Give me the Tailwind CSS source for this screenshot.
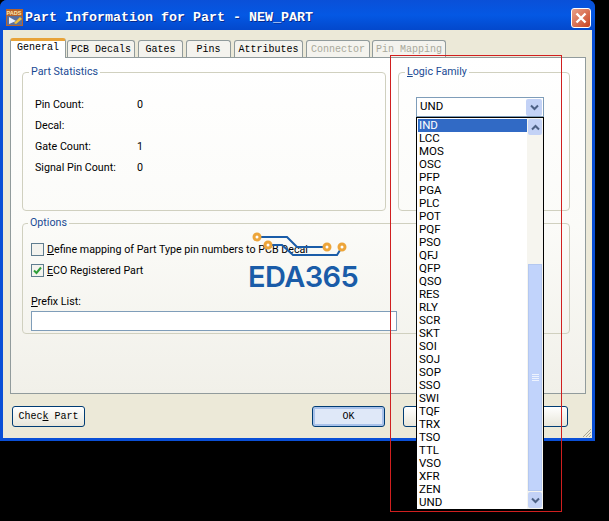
<!DOCTYPE html>
<html lang="en">
<head>
    <meta charset="UTF-8">
    <title>Part Information</title>
    <script src="https://cdn.jsdelivr.net/npm/@tailwindcss/browser@4"></script>
</head>
<body class="bg-black">
<div class="relative w-[609px] h-[521px] overflow-hidden bg-black font-['Roboto',sans-serif] text-[10.7px] text-black">

    <!-- Window -->
    <div class="w-[595px] h-[441px] flex flex-col rounded-t-[7px] overflow-hidden bg-[#0a4fd6]">
        <!-- Title bar -->
        <div class="h-[30px] shrink-0 flex items-center pt-[5px] pl-[6px] pr-[4px] bg-gradient-to-b from-[#0a50d8] via-[#0458e4] to-[#0348cc]">
            <svg width="17" height="17" viewBox="0 0 17 17" class="shrink-0">
                <rect width="17" height="17" fill="#b5622c"/>
                <rect x="1" y="7" width="15" height="9" fill="#5a6f9c"/>
                <path d="M3 8 L10 12 L3 15 Z" fill="#e8f0ff"/>
                <path d="M8 14 L14 8 L16 10 L10 15 Z" fill="#f2c23a"/>
                <text x="0.5" y="5.5" font-size="5.5" font-weight="700" fill="#ffe9b0" font-family="Liberation Sans">PADS</text>
            </svg>
            <span class="ml-[2px] mt-[1px] font-['Liberation_Mono',monospace] font-bold text-[13.33px] text-white tracking-normal [text-shadow:1px_1px_0_#0a2a8a]">Part Information for Part - NEW_PART</span>
            <div class="ml-auto w-[20px] h-[20px] rounded-[3px] border border-white bg-gradient-to-br from-[#e8a088] to-[#c8401c] flex items-center justify-center">
                <svg width="12" height="12" viewBox="0 0 12 12"><path d="M1.5 1.5 L10.5 10.5 M10.5 1.5 L1.5 10.5" stroke="#fff" stroke-width="2.4"/></svg>
            </div>
        </div>

        <!-- Client area -->
        <div class="relative flex-1 mx-[3px] mb-[3px] bg-[#ece9d8] pl-[7px] pr-[6px] flex flex-col">
            <!-- Tabs -->
            <div class="flex items-end h-[27px] font-['Liberation_Mono',monospace] text-[10px] leading-none">
                <div class="w-[56px] h-[20px] mr-[1px] -mb-[1px] z-10 relative flex items-center justify-center pb-[3px] bg-white border-x border-[#919b9c] rounded-t-[3px] border-t-[3px] border-t-[#e8a33a]">General</div>
                <div class="w-[68px] h-[17px] mr-[3px] pt-[1px] flex items-center justify-center bg-[#f4f3ee] border border-b-0 border-[#919b9c] rounded-t-[3px]">PCB Decals</div>
                <div class="w-[45px] h-[17px] mr-[3px] pt-[1px] flex items-center justify-center bg-[#f4f3ee] border border-b-0 border-[#919b9c] rounded-t-[3px]">Gates</div>
                <div class="w-[45px] h-[17px] mr-[3px] pt-[1px] flex items-center justify-center bg-[#f4f3ee] border border-b-0 border-[#919b9c] rounded-t-[3px]">Pins</div>
                <div class="w-[69px] h-[17px] mr-[3px] pt-[1px] flex items-center justify-center bg-[#f4f3ee] border border-b-0 border-[#919b9c] rounded-t-[3px]">Attributes</div>
                <div class="w-[64px] h-[17px] mr-[2px] pt-[1px] flex items-center justify-center bg-[#f4f3ee] border border-b-0 border-[#919b9c] rounded-t-[3px] text-[#a9a99b]">Connector</div>
                <div class="w-[74px] h-[17px] pt-[1px] flex items-center justify-center bg-[#f4f3ee] border border-b-0 border-[#919b9c] rounded-t-[3px] text-[#a9a99b]">Pin Mapping</div>
            </div>

            <!-- Tab panel -->
            <div class="w-[576px] h-[337px] border border-[#919b9c] bg-gradient-to-b from-white via-[#fbfbf8] to-[#f1f0e9] pl-[11px] pt-[6px]">
                <div class="flex gap-[12px]">
                    <fieldset class="w-[364px] h-[147px] border border-[#d0d0bf] rounded-[4px] pl-[12px]">
                        <legend class="ml-[-6px] px-[2px] text-[#1a4a94]">Part Statistics</legend>
                        <div class="grid grid-cols-[102px_1fr] auto-rows-[21px] items-center mt-[14px]">
                            <span>Pin Count:</span><span>0</span>
                            <span>Decal:</span><span></span>
                            <span>Gate Count:</span><span>1</span>
                            <span>Signal Pin Count:</span><span>0</span>
                        </div>
                    </fieldset>
                    <fieldset class="w-[172px] h-[147px] border border-[#d0d0bf] rounded-[4px]">
                        <legend class="ml-[6px] px-[2px] text-[#1a4a94]"><u>L</u>ogic Family</legend>
                    </fieldset>
                </div>

                <fieldset class="mt-[4px] w-[548px] h-[119px] border border-[#d0d0bf] rounded-[4px] pl-[8px]">
                    <legend class="ml-[-3px] px-[2px] text-[#1a4a94]">Options</legend>
                    <div class="flex items-center gap-[3px] mt-[12px] h-[13px]">
                        <div class="w-[13px] h-[13px] border border-[#5f7d8f] bg-[#f3f3ee]"></div>
                        <span><u>D</u>efine mapping of Part Type pin numbers to PCB Decal</span>
                    </div>
                    <div class="flex items-center gap-[3px] mt-[8px] h-[13px]">
                        <div class="w-[13px] h-[13px] border border-[#5f7d8f] bg-[#f3f3ee] flex items-center justify-center">
                            <svg width="9" height="9" viewBox="0 0 9 9"><path d="M1 4.5 L3.5 7 L8 1.5" fill="none" stroke="#2f9e3a" stroke-width="2"/></svg>
                        </div>
                        <span><u>E</u>CO Registered Part</span>
                    </div>
                    <div class="mt-[18px] h-[14px] leading-[14px]"><u>P</u>refix List:</div>
                    <div class="mt-[2px] w-[366px] h-[20px] border border-[#7f9db9] bg-white"></div>
                </fieldset>
            </div>

            <!-- Bottom buttons -->
            <div class="flex items-center h-[21px] mt-[12px] ml-[2px] font-['Liberation_Mono',monospace] text-[10px]">
                <div class="w-[73px] h-[21px] border border-[#003c74] rounded-[3px] bg-gradient-to-b from-white to-[#e8e6da] flex items-center justify-center"><span>Chec<u>k</u> Part</span></div>
                <div class="ml-[227px] w-[73px] h-[21px] border border-[#003c74] rounded-[3px] bg-[#dfe8f8] shadow-[inset_0_0_0_2px_#a9c2ea] flex items-center justify-center">OK</div>
                <div class="ml-[18px] w-[73px] h-[21px] border border-[#003c74] rounded-[3px] bg-gradient-to-b from-white to-[#e8e6da]"></div>
                <div class="ml-[19px] w-[73px] h-[21px] border border-[#003c74] rounded-[3px] bg-gradient-to-b from-white to-[#e8e6da]"></div>
            </div>

            <svg width="11" height="11" viewBox="0 0 11 11" class="absolute right-0 bottom-0">
                <path d="M10 2 L2 10 M10 5 L5 10 M10 8 L8 10" stroke="#a8a594" stroke-width="1"/>
            </svg>
        </div>
    </div>

    <!-- Combo box -->
    <div class="absolute left-[416px] top-[97px] w-[128px] h-[20px] border border-[#7f9db9] bg-white flex items-center pl-[3px] pr-[1px] text-[11.5px]">
        <span>UND</span>
        <div class="ml-auto w-[16px] h-[17px] rounded-[2px] bg-[#c3d2f6] flex items-center justify-center">
            <svg width="9" height="7" viewBox="0 0 9 7"><path d="M1 1.5 L4.5 5 L8 1.5" fill="none" stroke="#4d6185" stroke-width="2"/></svg>
        </div>
    </div>

    <!-- Open list -->
    <div class="absolute left-[416px] top-[117px] w-[128px] h-[392px] bg-white border border-black border-b-0 flex">
        <div class="flex-1 pt-[1px] pl-[1px] leading-[13px] text-[11.5px]">
            <div class="h-[13px] bg-[#316ac5] text-white pl-[1px]">IND</div>
            <div class="h-[13px] pl-[1px]">LCC</div>
            <div class="h-[13px] pl-[1px]">MOS</div>
            <div class="h-[13px] pl-[1px]">OSC</div>
            <div class="h-[13px] pl-[1px]">PFP</div>
            <div class="h-[13px] pl-[1px]">PGA</div>
            <div class="h-[13px] pl-[1px]">PLC</div>
            <div class="h-[13px] pl-[1px]">POT</div>
            <div class="h-[13px] pl-[1px]">PQF</div>
            <div class="h-[13px] pl-[1px]">PSO</div>
            <div class="h-[13px] pl-[1px]">QFJ</div>
            <div class="h-[13px] pl-[1px]">QFP</div>
            <div class="h-[13px] pl-[1px]">QSO</div>
            <div class="h-[13px] pl-[1px]">RES</div>
            <div class="h-[13px] pl-[1px]">RLY</div>
            <div class="h-[13px] pl-[1px]">SCR</div>
            <div class="h-[13px] pl-[1px]">SKT</div>
            <div class="h-[13px] pl-[1px]">SOI</div>
            <div class="h-[13px] pl-[1px]">SOJ</div>
            <div class="h-[13px] pl-[1px]">SOP</div>
            <div class="h-[13px] pl-[1px]">SSO</div>
            <div class="h-[13px] pl-[1px]">SWI</div>
            <div class="h-[13px] pl-[1px]">TQF</div>
            <div class="h-[13px] pl-[1px]">TRX</div>
            <div class="h-[13px] pl-[1px]">TSO</div>
            <div class="h-[13px] pl-[1px]">TTL</div>
            <div class="h-[13px] pl-[1px]">VSO</div>
            <div class="h-[13px] pl-[1px]">XFR</div>
            <div class="h-[13px] pl-[1px]">ZEN</div>
            <div class="h-[13px] pl-[1px]">UND</div>
        </div>
        <!-- Scrollbar -->
        <div class="w-[16px] flex flex-col bg-[#f6f5ef]">
            <div class="h-[16px] m-[1px] rounded-[2px] bg-[#c3d2f6] flex items-center justify-center">
                <svg width="9" height="7" viewBox="0 0 9 7"><path d="M1 5.5 L4.5 2 L8 5.5" fill="none" stroke="#4d6185" stroke-width="2"/></svg>
            </div>
            <div class="flex-1 flex flex-col pt-[128px]">
                <div class="flex-1 mx-[1px] bg-[#c1d3fb] border border-[#b4c8f0] flex flex-col items-center justify-center gap-[1px]">
                    <div class="w-[7px] h-[1px] bg-[#eef3fe]"></div>
                    <div class="w-[7px] h-[1px] bg-[#eef3fe]"></div>
                    <div class="w-[7px] h-[1px] bg-[#eef3fe]"></div>
                    <div class="w-[7px] h-[1px] bg-[#eef3fe]"></div>
                </div>
            </div>
            <div class="h-[16px] m-[1px] rounded-[2px] bg-[#c3d2f6] flex items-center justify-center">
                <svg width="9" height="7" viewBox="0 0 9 7"><path d="M1 1.5 L4.5 5 L8 1.5" fill="none" stroke="#4d6185" stroke-width="2"/></svg>
            </div>
        </div>
    </div>

    <!-- Red marker over the screenshot -->
    <div class="absolute left-[390px] top-[55px] w-[172px] h-[457px] border border-[#d01f1f] pointer-events-none"></div>

    <!-- Watermark -->
    <div class="absolute left-[248px] top-[230px] w-[111px] h-[62px] pointer-events-none">
        <svg width="110" height="34" viewBox="248 230 110 34" class="absolute left-0 top-0">
            <path d="M257 237 H287 L297 247 H327 M268 245 H282 L293 255 H337 L342 247" fill="none" stroke="#1a5ca8" stroke-width="2"/>
            <circle cx="257" cy="237" r="3" fill="#fff" stroke="#eda53a" stroke-width="3"/>
            <circle cx="268" cy="245" r="3" fill="#fff" stroke="#eda53a" stroke-width="3"/>
            <circle cx="327" cy="247" r="3" fill="#fff" stroke="#eda53a" stroke-width="3"/>
            <circle cx="342" cy="247" r="3" fill="#fff" stroke="#eda53a" stroke-width="3"/>
        </svg>
        <div class="absolute left-0 top-[30px] font-['Inter',sans-serif] font-semibold text-[29px] leading-[34px] tracking-[-0.6px] text-[#1a5ca8]">EDA365</div>
    </div>
</div>
</body>
</html>
